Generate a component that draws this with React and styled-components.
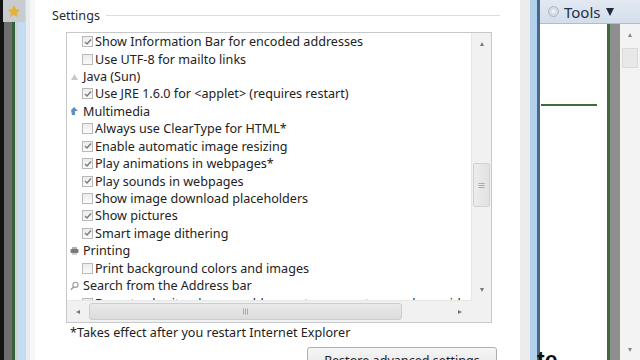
import React from "react";
import styled, { createGlobalStyle } from "styled-components";

const Global = createGlobalStyle`
  html, body { margin: 0; padding: 0; background: #fff; }
  body { font-family: "Noto Sans", "Open Sans", sans-serif; }
`;

const Root = styled.div`
  width: 640px;
  height: 360px;
  overflow: hidden;
  display: flex;
  background: #fff;
  color: #1f1f1f;
`;

/* ---------- left window frame ---------- */
const LeftFrame = styled.div`
  position: relative;
  width: 35px;
  flex: none;
  display: flex;
`;
const Stripe = styled.div`
  width: ${(p) => p.$w}px;
  background: ${(p) => p.$bg};
  flex: none;
`;
const FrameIcon = styled.div`
  position: absolute;
  left: 3px;
  top: 0;
  width: 22px;
  height: 22px;
  background: #c9ccce;
  display: flex;
  align-items: center;
  justify-content: center;
`;

/* ---------- dialog ---------- */
const Dialog = styled.div`
  width: 485px;
  flex: none;
  background: #fff;
  display: flex;
  flex-direction: column;
  padding: 7px 0 0 17px;
  box-sizing: border-box;
  font-size: 12.6px;
  overflow: hidden;
  & > * { flex: none; }
`;
const GroupHeader = styled.div`
  display: flex;
  align-items: center;
  gap: 6px;
  width: 448px;
  height: 16px;
  color: #2b2b2b;
`;
const GroupLine = styled.div`
  flex: 1;
  height: 1px;
  background: #d7dde3;
`;
const ListBox = styled.div`
  margin: 9px 0 0 14px;
  width: 426px;
  height: 291px;
  box-sizing: border-box;
  border: 1px solid #c6c8cc;
  display: grid;
  grid-template-columns: 1fr 20px;
  grid-template-rows: 1fr 22px;
  overflow: hidden;
`;
const Items = styled.div`
  overflow: hidden;
  display: flex;
  flex-direction: column;
  min-height: 0;
`;
const Row = styled.div`
  height: 17.43px;
  flex: none;
  display: flex;
  align-items: center;
  white-space: nowrap;
  padding-left: ${(p) => (p.$cat ? 3 : 15)}px;
  gap: ${(p) => (p.$cat ? 4 : 2)}px;
  color: #222;
`;
const Box = styled.span`
  width: 11px;
  height: 11px;
  box-sizing: border-box;
  border: 1px solid #b9b9b9;
  background: linear-gradient(#ececec, #fafafa);
  display: inline-flex;
  align-items: center;
  justify-content: center;
  flex: none;
`;
const CatIcon = styled.span`
  width: 9px;
  height: 10px;
  display: inline-flex;
  align-items: center;
  justify-content: center;
  flex: none;
`;

const VScroll = styled.div`
  background: #f1f1f1;
  border-left: 1px solid #e6e6e6;
  display: flex;
  flex-direction: column;
  align-items: center;
  min-height: 0;
`;
const Arrow = styled.div`
  width: 100%;
  height: ${(p) => p.$h || 20}px;
  display: flex;
  align-items: center;
  justify-content: center;
  flex: none;
`;
const VTrack = styled.div`
  flex: 1;
  width: 100%;
  padding-top: 108px;
  box-sizing: border-box;
`;
const VThumb = styled.div`
  margin: 0 1px;
  height: 44px;
  box-sizing: border-box;
  border: 1px solid #d2d2d2;
  border-radius: 2px;
  background: linear-gradient(90deg, #ececec, #e2e2e2);
  display: flex;
  align-items: center;
  justify-content: center;
`;
const HScroll = styled.div`
  background: #f1f1f1;
  border-top: 1px solid #e6e6e6;
  display: flex;
  align-items: center;
`;
const HArrow = styled.div`
  width: 22px;
  height: 100%;
  display: flex;
  align-items: center;
  justify-content: center;
  flex: none;
`;
const HTrack = styled.div`
  flex: 1;
  height: 100%;
  display: flex;
  align-items: center;
`;
const HThumb = styled.div`
  width: 313px;
  height: 17px;
  box-sizing: border-box;
  border: 1px solid #cdcdcd;
  border-radius: 3px;
  background: linear-gradient(#e9e9e9, #dcdcdc);
  display: flex;
  align-items: center;
  justify-content: center;
`;
const Corner = styled.div`
  background: #f1f1f1;
`;
const Note = styled.div`
  margin: 2px 0 0 18px;
  height: 16px;
  line-height: 16px;
  color: #222;
`;
const ButtonRow = styled.div`
  display: flex;
  justify-content: flex-end;
  width: 445px;
  margin-top: 6px;
`;
const Button = styled.div`
  width: 190px;
  height: 26px;
  box-sizing: border-box;
  border: 1px solid #b0b0b0;
  border-radius: 3px;
  background: linear-gradient(#f6f6f6, #e4e4e4);
  display: flex;
  justify-content: center;
  padding-top: 4px;
  color: #222;
`;

/* ---------- gap between windows ---------- */
const Between = styled.div`
  width: 20px;
  flex: none;
  display: flex;
`;

/* ---------- IE window ---------- */
const IE = styled.div`
  flex: 1;
  display: flex;
  flex-direction: column;
`;
const Toolbar = styled.div`
  height: 23px;
  flex: none;
  background: linear-gradient(#e2e9f2, #d3deeb);
  border-bottom: 1px solid #aebdcf;
  display: flex;
  align-items: center;
  padding-left: 8px;
  gap: 5px;
  font-size: 15px;
  color: #22304a;
`;
const IEBody = styled.div`
  flex: 1;
  display: flex;
  min-height: 0;
`;
const Page = styled.div`
  width: 67px;
  flex: none;
  background: #fff;
  display: flex;
  flex-direction: column;
  padding-top: 80px;
  box-sizing: border-box;
`;
const HRule = styled.div`
  width: 56px;
  margin-left: 1px;
  height: 2px;
  background: #3f6a3e;
`;
const BigText = styled.div`
  margin-top: auto;
  margin-bottom: -14px;
  font-family: "Liberation Sans", Arial, sans-serif;
  font-weight: bold;
  font-size: 23px;
  color: #111;
  margin-left: -3px;
`;
const IEScroll = styled.div`
  width: 20px;
  flex: none;
  background: #f3f3f3;
  display: flex;
  flex-direction: column;
  align-items: center;
`;
const IEThumb = styled.div`
  width: 16px;
  height: 20px;
  box-sizing: border-box;
  border: 1px solid #dadada;
  background: #e8e8e8;
  margin-top: 2px;
`;
const Spacer = styled.div`
  flex: 1;
`;

const Check = ({ on }) => (
  <Box>
    {on && (
      <svg width="8" height="8" viewBox="0 0 8 8">
        <path d="M1 4 L3 6 L7 1.5" stroke="#7a7a7a" strokeWidth="1.4" fill="none" />
      </svg>
    )}
  </Box>
);

const icons = {
  java: (
    <svg width="9" height="10" viewBox="0 0 9 10">
      <path d="M1 8 L4.5 2 L8 8 Z" fill="#c9c9c9" />
    </svg>
  ),
  media: (
    <svg width="9" height="10" viewBox="0 0 9 10">
      <path d="M1 4 L4 1 L8 5 L5 5 L5 9 L2 9 Z" fill="#5c8fc4" />
    </svg>
  ),
  print: (
    <svg width="9" height="10" viewBox="0 0 9 10">
      <rect x="0.5" y="3" width="8" height="4" rx="1" fill="#7a7a7a" />
      <rect x="2" y="1" width="5" height="2" fill="#b0b0b0" />
      <rect x="2" y="7" width="5" height="2" fill="#d0d0d0" />
    </svg>
  ),
  search: (
    <svg width="9" height="10" viewBox="0 0 9 10">
      <circle cx="5.5" cy="3.8" r="2.6" stroke="#9a9a9a" strokeWidth="1.1" fill="none" />
      <path d="M3.6 5.8 L1 8.8" stroke="#9a9a9a" strokeWidth="1.4" />
    </svg>
  ),
};

const rows = [
  { t: "Show Information Bar for encoded addresses", c: true },
  { t: "Use UTF-8 for mailto links", c: false },
  { t: "Java (Sun)", cat: "java" },
  { t: "Use JRE 1.6.0 for <applet> (requires restart)", c: true },
  { t: "Multimedia", cat: "media" },
  { t: "Always use ClearType for HTML*", c: false },
  { t: "Enable automatic image resizing", c: true },
  { t: "Play animations in webpages*", c: true },
  { t: "Play sounds in webpages", c: true },
  { t: "Show image download placeholders", c: false },
  { t: "Show pictures", c: true },
  { t: "Smart image dithering", c: true },
  { t: "Printing", cat: "print" },
  { t: "Print background colors and images", c: false },
  { t: "Search from the Address bar", cat: "search" },
  { t: "Do not submit unknown addresses to your auto-search provider", c: false },
];

const Tri = ({ dir, size = 5, color = "#555" }) => {
  const s = size;
  const pts = {
    up: `0,${s} ${s},${s} ${s / 2},0`,
    down: `0,0 ${s},0 ${s / 2},${s}`,
    left: `${s},0 ${s},${s} 0,${s / 2}`,
    right: `0,0 0,${s} ${s},${s / 2}`,
  }[dir];
  return (
    <svg width={s} height={s} viewBox={`0 0 ${s} ${s}`}>
      <polygon points={pts} fill={color} />
    </svg>
  );
};

const Grip = ({ vertical }) => (
  <svg width="7" height="7" viewBox="0 0 7 7">
    {[1, 3, 5].map((v) =>
      vertical ? (
        <line key={v} x1="0.5" x2="6.5" y1={v + 0.5} y2={v + 0.5} stroke="#9b9b9b" strokeWidth="0.8" />
      ) : (
        <line key={v} y1="0.5" y2="6.5" x1={v + 0.5} x2={v + 0.5} stroke="#9b9b9b" strokeWidth="0.8" />
      )
    )}
  </svg>
);

export default function App() {
  return (
    <>
      <Global />
      <Root>
        <LeftFrame>
          <Stripe $w={4} $bg="#151515" />
          <Stripe $w={8} $bg="#6e6e6e" />
          <Stripe $w={3} $bg="#35603a" />
          <Stripe $w={3} $bg="#cdd3cf" />
          <Stripe $w={8} $bg="#c4dcf1" />
          <Stripe $w={4} $bg="#e6ecf1" />
          <Stripe $w={5} $bg="#f7f7f7" />
          <FrameIcon>
            <svg width="14" height="14" viewBox="0 0 14 14">
              <path d="M7 1 L9 5 L13 6 L10 9 L11 13 L7 11 L3 13 L4 9 L1 6 L5 5 Z" fill="#e2b43a" />
            </svg>
          </FrameIcon>
        </LeftFrame>

        <Dialog>
          <GroupHeader>
            <span>Settings</span>
            <GroupLine />
          </GroupHeader>
          <ListBox>
            <Items>
              {rows.map((r, i) =>
                r.cat ? (
                  <Row key={i} $cat>
                    <CatIcon>{icons[r.cat]}</CatIcon>
                    <span>{r.t}</span>
                  </Row>
                ) : (
                  <Row key={i}>
                    <Check on={r.c} />
                    <span>{r.t}</span>
                  </Row>
                )
              )}
            </Items>
            <VScroll>
              <Arrow $h={22}>
                <Tri dir="up" size={4} color="#777" />
              </Arrow>
              <VTrack>
                <VThumb>
                  <Grip vertical />
                </VThumb>
              </VTrack>
              <Arrow $h={20}>
                <Tri dir="down" size={4} color="#777" />
              </Arrow>
            </VScroll>
            <HScroll>
              <HArrow>
                <Tri dir="left" size={4} color="#777" />
              </HArrow>
              <HTrack>
                <HThumb>
                  <Grip />
                </HThumb>
              </HTrack>
              <HArrow>
                <Tri dir="right" size={4} color="#777" />
              </HArrow>
            </HScroll>
            <Corner />
          </ListBox>
          <Note>*Takes effect after you restart Internet Explorer</Note>
          <ButtonRow>
            <Button>Restore advanced settings</Button>
          </ButtonRow>
        </Dialog>

        <Between>
          <Stripe $w={10} $bg="#ececec" />
          <Stripe $w={7} $bg="#b3d0ec" />
          <Stripe $w={3} $bg="#48698c" />
        </Between>

        <IE>
          <Toolbar>
            <svg width="11" height="11" viewBox="0 0 11 11">
              <circle cx="5.5" cy="5.5" r="5" fill="#d8dde3" stroke="#aab2bc" />
              <circle cx="5.5" cy="5.5" r="2" fill="#eef1f4" />
            </svg>
            <span>Tools</span>
            <Tri dir="down" size={8} color="#1f2a3c" />
          </Toolbar>
          <IEBody>
            <Page>
              <HRule />
              <BigText>te</BigText>
            </Page>
            <Stripe $w={3} $bg="#3c6b3d" />
            <Stripe $w={10} $bg="#8e8e8e" />
            <IEScroll>
              <Arrow $h={22}>
                <Tri dir="up" size={4} color="#888" />
              </Arrow>
              <IEThumb />
              <Spacer />
              <Arrow $h={20}>
                <Tri dir="down" size={4} color="#888" />
              </Arrow>
            </IEScroll>
          </IEBody>
        </IE>
      </Root>
    </>
  );
}
